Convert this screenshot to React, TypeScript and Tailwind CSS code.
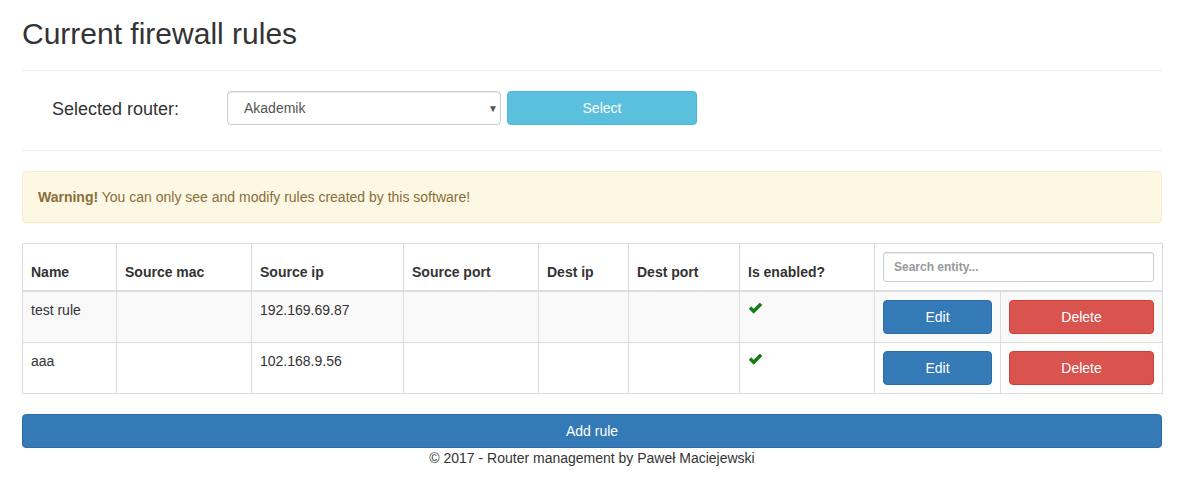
import React from 'react'

type Rule = {
  name: string
  sourceMac: string
  sourceIp: string
  sourcePort: string
  destIp: string
  destPort: string
  enabled: boolean
}

const rules: Rule[] = [
  { name: 'test rule', sourceMac: '', sourceIp: '192.169.69.87', sourcePort: '', destIp: '', destPort: '', enabled: true },
  { name: 'aaa', sourceMac: '', sourceIp: '102.168.9.56', sourcePort: '', destIp: '', destPort: '', enabled: true }
]

const headers = ['Name', 'Source mac', 'Source ip', 'Source port', 'Dest ip', 'Dest port', 'Is enabled?']
const widths = ['w-[94px]', 'w-[135px]', 'w-[152px]', 'w-[135px]', 'w-[90px]', 'w-[111px]', 'w-[135px]', 'w-[126px]', 'w-[162px]']

const OkIcon = () => (
  <svg width="13" height="11" viewBox="0 0 14 12" className="mt-[3px] ml-[1px]">
    <polygon points="0,6.3 2.3,4 5,6.7 11.7,0 14,2.3 5,11.3" fill="#0b800b" stroke="#0a5a0a" strokeWidth="0.6" />
  </svg>
)

const App = () => {
  return (
    <div className="bg-white text-[#333] text-[14px] leading-[20px] font-['Liberation_Sans',Arial,sans-serif] min-h-[480px]">
      <div className="ml-[22px] w-[1140px]">
        <h2 className="pt-[17px] text-[30px] leading-[33px] font-normal">Current firewall rules</h2>
        <hr className="mt-[20px] border-t border-[#eee]" />

        <div className="flex items-start h-[79px] pt-[20px]">
          <label className="w-[205px] pl-[30px] pt-[6px] text-[18px] leading-[24px]">Selected router:</label>
          <div className="relative w-[274px] h-[34px]">
            <select className="appearance-none w-full h-full border border-[#ccc] rounded-[4px] bg-white pl-[16px] text-[14px] text-[#555] shadow-[inset_0_1px_1px_rgba(0,0,0,0.075)]">
              <option>Akademik</option>
            </select>
            <span className="absolute right-[3px] top-[8px] text-[10px] text-[#555] pointer-events-none">▼</span>
          </div>
          <button className="ml-[6px] w-[190px] h-[34px] rounded-[4px] bg-[#5bc0de] border border-[#46b8da] text-white text-[14px]">
            Select
          </button>
        </div>

        <hr className="border-t border-[#eee]" />

        <div className="mt-[20px] h-[52px] px-[15px] py-[15px] border border-[#faebcc] bg-[#fcf8e3] text-[#8a6d3b] rounded-[4px]">
          <strong>Warning!</strong> You can only see and modify rules created by this software!
        </div>

        <table className="mt-[20px] w-[1140px] table-fixed border-collapse border border-[#ddd]">
          <colgroup>
            {widths.map((w, i) => (
              <col key={i} className={w} />
            ))}
          </colgroup>
          <thead>
            <tr>
              {headers.map((h) => (
                <th key={h} className="text-left align-bottom p-[8px] border border-[#ddd] border-b-2 font-bold">
                  {h}
                </th>
              ))}
              <th colSpan={2} className="align-bottom p-[8px] border border-[#ddd] border-b-2">
                <input
                  placeholder="Search entity..."
                  className="w-full h-[30px] px-[10px] border border-[#ccc] rounded-[3px] text-[12px] font-bold placeholder:text-[#999] shadow-[inset_0_1px_1px_rgba(0,0,0,0.075)]"
                />
              </th>
            </tr>
          </thead>
          <tbody>
            {rules.map((r, idx) => (
              <tr key={idx} className={idx % 2 === 0 ? 'bg-[#f9f9f9]' : 'bg-white'}>
                <td className="align-top p-[8px] border border-[#ddd]">{r.name}</td>
                <td className="align-top p-[8px] border border-[#ddd]">{r.sourceMac}</td>
                <td className="align-top p-[8px] border border-[#ddd]">{r.sourceIp}</td>
                <td className="align-top p-[8px] border border-[#ddd]">{r.sourcePort}</td>
                <td className="align-top p-[8px] border border-[#ddd]">{r.destIp}</td>
                <td className="align-top p-[8px] border border-[#ddd]">{r.destPort}</td>
                <td className="align-top p-[8px] border border-[#ddd]">{r.enabled && <OkIcon />}</td>
                <td className="align-top p-[8px] border border-[#ddd]">
                  <button className="w-full h-[34px] rounded-[4px] bg-[#337ab7] border border-[#2e6da4] text-white">Edit</button>
                </td>
                <td className="align-top p-[8px] border border-[#ddd]">
                  <button className="w-full h-[34px] rounded-[4px] bg-[#d9534f] border border-[#d43f3a] text-white">Delete</button>
                </td>
              </tr>
            ))}
          </tbody>
        </table>

        <button className="mt-[20px] w-[1140px] h-[34px] rounded-[4px] bg-[#337ab7] border border-[#2e6da4] text-white">
          Add rule
        </button>

        <footer className="text-center">
          <p>© 2017 - Router management by Paweł Maciejewski</p>
        </footer>
      </div>
    </div>
  )
}

export default App
